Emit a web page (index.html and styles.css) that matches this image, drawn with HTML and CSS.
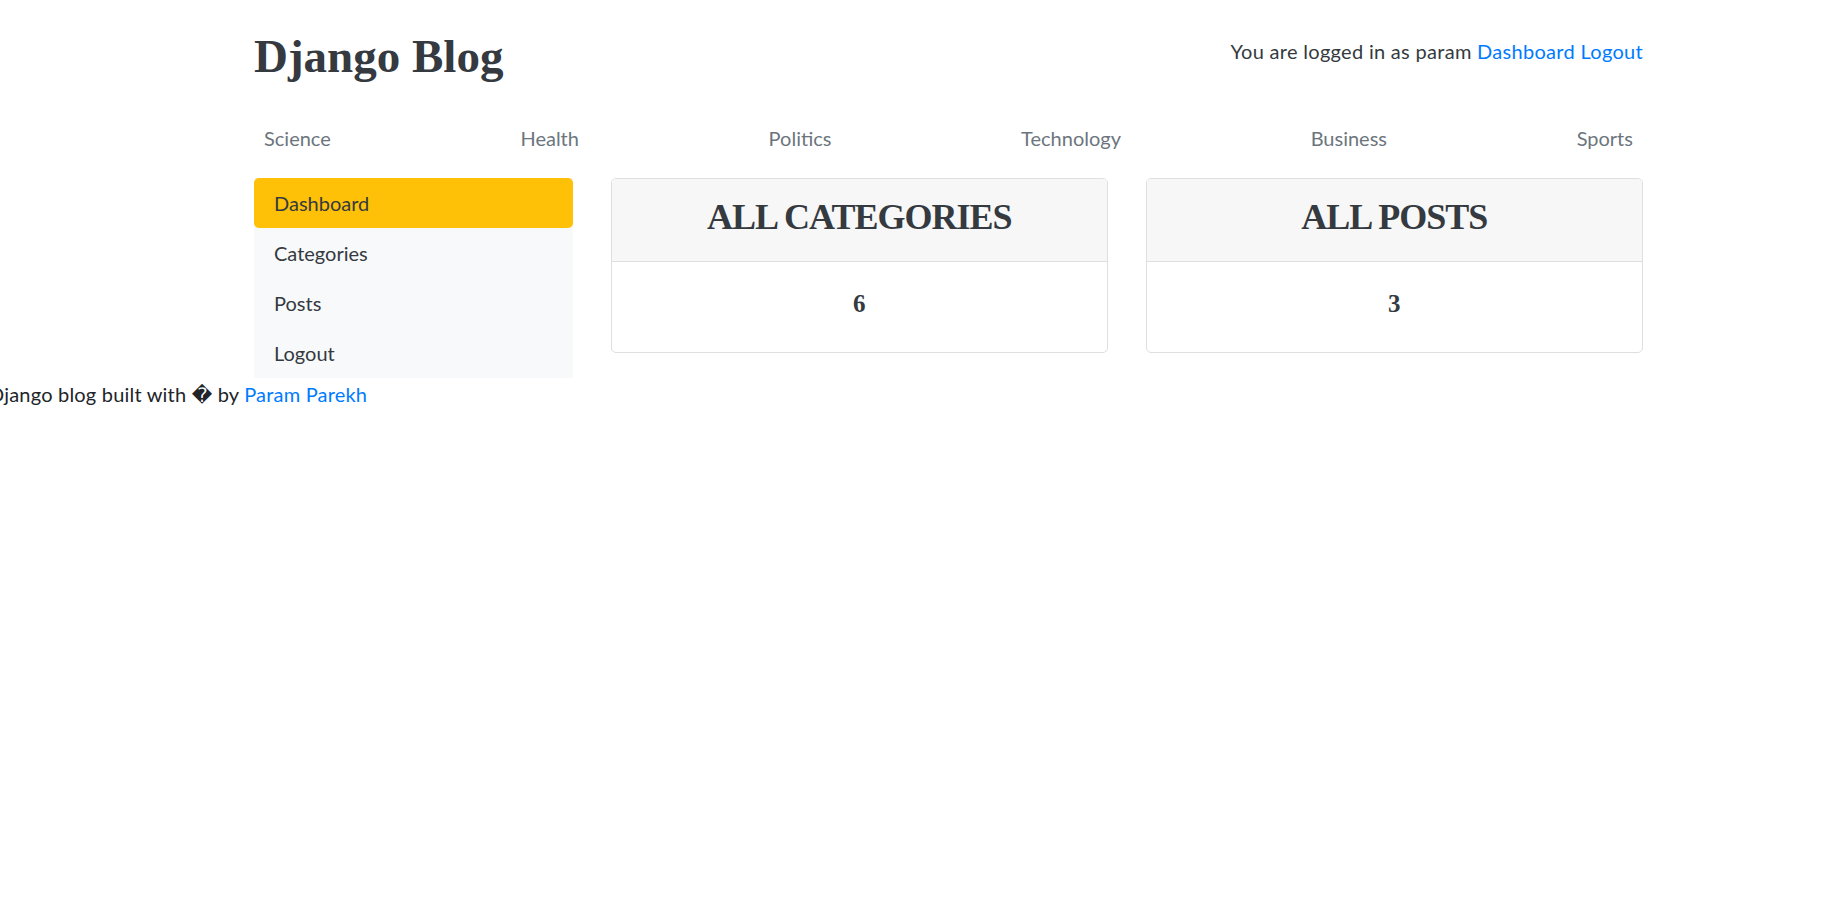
FILE: index.html
```html
<!DOCTYPE html>
<html lang="en">
<head>
<meta charset="utf-8">
<title>Django Blog</title>
<link rel="stylesheet" href="styles.css">
</head>
<body>
<div class="container">
  <header class="blog-header">
    <a class="logo" href="#">Django Blog</a>
    <div class="user-info">You are logged in as param <a href="#" class="link">Dashboard</a> <a href="#" class="link">Logout</a></div>
  </header>
  <nav class="cat-nav">
    <a href="#">Science</a>
    <a href="#">Health</a>
    <a href="#">Politics</a>
    <a href="#">Technology</a>
    <a href="#">Business</a>
    <a href="#">Sports</a>
  </nav>
  <main class="main-row">
    <aside class="sidebar">
      <a href="#" class="side-link active">Dashboard</a>
      <a href="#" class="side-link">Categories</a>
      <a href="#" class="side-link">Posts</a>
      <a href="#" class="side-link">Logout</a>
    </aside>
    <section class="cards">
      <div class="card">
        <div class="card-header"><h3>ALL CATEGORIES</h3></div>
        <div class="card-body"><h5>6</h5></div>
      </div>
      <div class="card">
        <div class="card-header"><h3>ALL POSTS</h3></div>
        <div class="card-body"><h5>3</h5></div>
      </div>
    </section>
  </main>
</div>
<footer class="footer">Django blog built with <span class="bad">&#xFFFD;</span> by <a href="#" class="link">Param Parekh</a></footer>
</body>
</html>
```
FILE: styles.css
```css
html, body {
  margin: 0;
  padding: 0;
  background: #fff;
}
body {
  font-family: "Lato", "Noto Sans", sans-serif;
  font-size: 20px;
  line-height: 30px;
  color: #212529;
}
a {
  text-decoration: none;
}
.link {
  color: #007bff;
}
.container {
  width: 1389px;
  margin-left: 254px;
}
.blog-header {
  height: 108px;
  display: flex;
  justify-content: space-between;
  align-items: flex-start;
}
.logo {
  font-family: "Liberation Serif", serif;
  font-weight: 700;
  font-size: 47px;
  line-height: 56px;
  margin-top: 28px;
  color: #343a40;
}
.user-info {
  margin-top: 36px;
  color: #343a40;
  letter-spacing: 0.3px;
}
.cat-nav {
  display: flex;
  justify-content: space-between;
  padding: 5px 0;
  height: 50px;
}
.cat-nav a {
  padding: 10px;
  color: #6c757d;
}
.main-row {
  display: grid;
  grid-template-columns: 319px 1fr;
  column-gap: 37.5px;
  margin-top: 10px;
  align-items: start;
}
.sidebar {
  display: flex;
  flex-direction: column;
  background: #f8f9fa;
}
.side-link {
  padding: 10px 20px;
  color: #343a40;
  border-radius: 5px;
}
.side-link.active {
  background: #ffc107;
}
.cards {
  display: grid;
  grid-template-columns: 1fr 1fr;
  column-gap: 37.5px;
}
.card {
  border: 1px solid #dfdfdf;
  border-radius: 5px;
  overflow: hidden;
}
.card-header {
  background: #f7f7f7;
  border-bottom: 1px solid #dfdfdf;
  padding: 17px 20px 13px;
}
.card-header h3 {
  margin: 0 0 10px;
  font-family: "Liberation Serif", serif;
  font-weight: 700;
  font-size: 36px;
  line-height: 42px;
  letter-spacing: -1px;
  text-align: center;
  color: #343a40;
}
.card-body {
  padding: 27px 25px 23px;
}
.card-body h5 {
  margin: 0 0 10px;
  font-family: "Liberation Serif", serif;
  font-weight: 700;
  font-size: 25px;
  line-height: 30px;
  text-align: center;
  color: #343a40;
}
.footer {
  margin-left: -11px;
  letter-spacing: 0.2px;
  padding-top: 1px;
}
.bad {
  font-family: "DejaVu Sans", sans-serif;
}
```
